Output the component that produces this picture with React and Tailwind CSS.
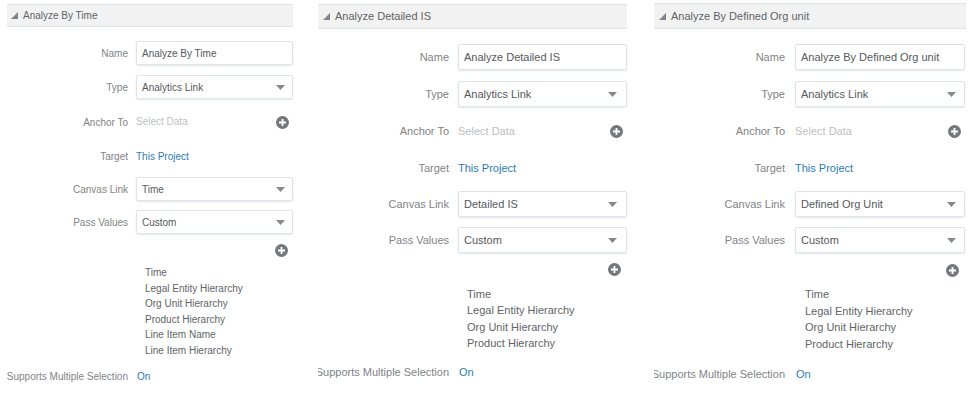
const chevron = (
  <svg width="9" height="5" viewBox="0 0 9 5" className="shrink-0"><path d="M0 0h9L4.5 5z" fill="#85898c" /></svg>
);

function Plus({ size = 13 }) {
  return (
    <svg width={size} height={size} viewBox="0 0 14 14" className="shrink-0">
      <circle cx="7" cy="7" r="7" fill="#74787c" />
      <path d="M7 3.2v7.6M3.2 7h7.6" stroke="#fff" strokeWidth="2" />
    </svg>
  );
}

function Field({ c, value, select }) {
  return (
    <div className={`${c.control} flex items-center justify-between border border-[#dfe4ea] rounded-[2px] bg-white shadow-[0_1px_2px_rgba(120,140,160,0.2)] pl-[5px] text-[#55595c]`}>
      <span className="whitespace-nowrap">{value}</span>
      {select && <span className={c.chevronGap}>{chevron}</span>}
    </div>
  );
}

function Row({ c, label, children, className }) {
  return (
    <div className={`flex items-center ${className}`}>
      <div className={`${c.label} flex shrink-0 justify-end overflow-hidden text-[#808487] whitespace-nowrap`}><span className="shrink-0">{label}</span></div>
      <div className={`${c.value} min-w-0`}>{children}</div>
    </div>
  );
}

function Panel({ c, title, name, canvas, values }) {
  return (
    <section className={`${c.panel} ${c.text} shrink-0`} style={{ fontFamily: '"Liberation Sans", Arial, sans-serif' }}>
      <div className={`${c.header} flex items-center border-t border-b border-[#dde3ea] bg-[#f2f2f2] text-[#606467]`}>
        <svg width="7" height="7" viewBox="0 0 7 7" className="mr-[5px] shrink-0"><path d="M7 0v7H0z" fill="#808487" /></svg>
        {title}
      </div>
      <Row c={c} label="Name" className={c.r1}><Field c={c} value={name} /></Row>
      <Row c={c} label="Type" className={c.r2}><Field c={c} value="Analytics Link" select /></Row>
      <Row c={c} label="Anchor To" className={c.r3}>
        <div className={`flex items-center justify-between ${c.plain}`}>
          <span className="text-[#bcbfc1]">Select Data</span>
          <span className={c.plusGap}><Plus size={c.plusSize} /></span>
        </div>
      </Row>
      <Row c={c} label="Target" className={c.r4}>
        <div className={c.plain}><span className="text-[#2b7cb5]">This Project</span></div>
      </Row>
      <Row c={c} label="Canvas Link" className={c.r5}><Field c={c} value={canvas} select /></Row>
      <Row c={c} label="Pass Values" className={c.r6}><Field c={c} value="Custom" select /></Row>
      <div className={`flex justify-end ${c.addRow}`}><Plus size={c.plusSize} /></div>
      <ul className={`${c.list} text-[#606467]`}>
        {values.map((v) => <li key={v} className={c.item}>{v}</li>)}
      </ul>
      <Row c={c} label="Supports Multiple Selection" className={c.r7}>
        <span className="ml-[1px] text-[#2b7cb5]">On</span>
      </Row>
    </section>
  );
}

const small = {
  panel: "w-[286px] ml-[7px] mt-[4px]", text: "text-[10px]", header: "h-[23px] pl-[4px]",
  label: "w-[121px] mr-[8px]", value: "w-[157px]", control: "h-[24px]", plain: "h-[18px] leading-[20px]",
  chevronGap: "mr-[7px]", plusGap: "mr-[4px]", plusSize: 13,
  r1: "mt-[14px]", r2: "mt-[10px]", r3: "mt-[14px]", r4: "mt-[16px]", r5: "mt-[12px]", r6: "mt-[9px]",
  addRow: "mt-[10px] pr-[5px]", list: "mt-[8px] ml-[138px]", item: "h-[15.5px] leading-[15.5px]", r7: "mt-[11px]",
};
const mid = {
  panel: "w-[309px] ml-[25px] mt-[4px]", text: "text-[11px]", header: "h-[25px] pl-[5px]",
  label: "w-[131px] mr-[9px]", value: "w-[169px]", control: "h-[26px]", plain: "h-[18px] leading-[18px]",
  chevronGap: "mr-[9px]", plusGap: "mr-[4px]", plusSize: 13,
  r1: "mt-[15px]", r2: "mt-[11px]", r3: "mt-[15px]", r4: "mt-[19px]", r5: "mt-[14px]", r6: "mt-[10px]",
  addRow: "mt-[10px] pr-[6px]", list: "mt-[10px] ml-[149px]", item: "h-[16.3px] leading-[16.3px]", r7: "mt-[13px]",
};
const large = {
  panel: "w-[312px] ml-[27px] mt-[3px]", text: "text-[11px]", header: "h-[26px] pl-[5px]",
  label: "w-[131px] mr-[10px]", value: "w-[170px]", control: "h-[26px]", plain: "h-[18px] leading-[18px]",
  chevronGap: "mr-[8px]", plusGap: "mr-[4px]", plusSize: 13,
  r1: "mt-[15px]", r2: "mt-[11px]", r3: "mt-[15px]", r4: "mt-[19px]", r5: "mt-[14px]", r6: "mt-[10px]",
  addRow: "mt-[11px] pr-[7px]", list: "mt-[9px] ml-[151px]", item: "h-[16.7px] leading-[16.7px]", r7: "mt-[13px]",
};

const base = ["Time", "Legal Entity Hierarchy", "Org Unit Hierarchy", "Product Hierarchy"];

export default function App() {
  return (
    <div className="flex w-[975px] h-[402px] overflow-hidden bg-white">
      <Panel c={small} title="Analyze By Time" name="Analyze By Time" canvas="Time" values={[...base, "Line Item Name", "Line Item Hierarchy"]} />
      <Panel c={mid} title="Analyze Detailed IS" name="Analyze Detailed IS" canvas="Detailed IS" values={base} />
      <Panel c={large} title="Analyze By Defined Org unit" name="Analyze By Defined Org unit" canvas="Defined Org Unit" values={base} />
    </div>
  );
}
